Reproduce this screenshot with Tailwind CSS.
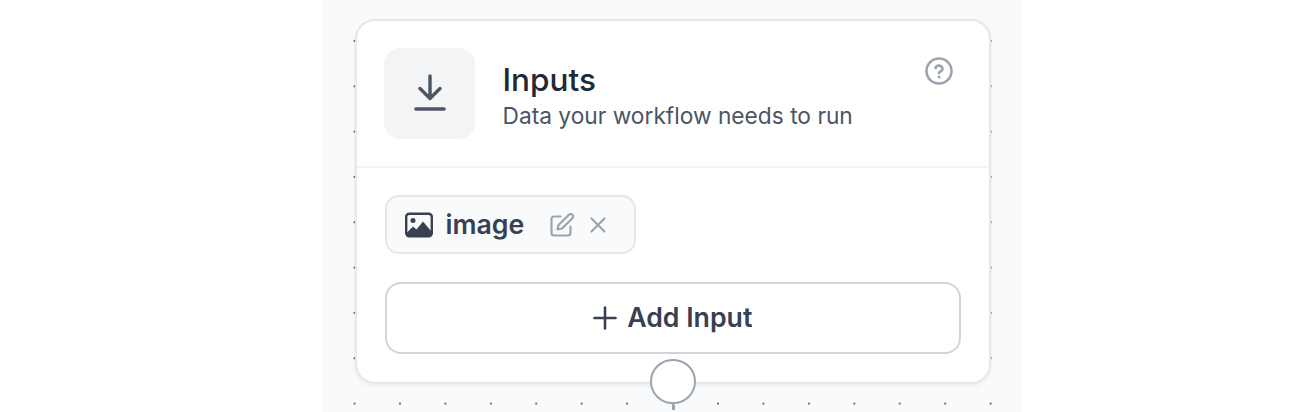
<!DOCTYPE html>
<html>
<head>
<meta charset="utf-8">
<script src="https://cdn.jsdelivr.net/npm/@tailwindcss/browser@4"></script>
</head>
<body class="bg-white font-['Inter',sans-serif] overflow-hidden">
<div class="w-[1316px] h-[412px] flex justify-center bg-white overflow-hidden">
  <div class="relative ml-[27px] w-[699px] h-[412px] bg-[#f9fafb] bg-[radial-gradient(circle,#6b7280_0.8px,transparent_1.2px)] bg-[size:45.45px_45.33px] bg-[position:9.8px_18.3px] shrink-0 overflow-hidden">
    <div class="ml-[33px] mt-[19px] w-[635.5px] h-[365px] bg-white border-2 border-[#e5e7eb] rounded-[20px] shadow-[0_2px_4px_rgba(0,0,0,0.06)] flex flex-col">
      <div class="h-[147px] border-b-2 border-[#f3f4f6] flex pl-[27px] pr-[35.5px] pt-[27px] relative">
        <div class="w-[91px] h-[91px] rounded-[16px] bg-[#f3f4f6] flex items-center justify-center shrink-0">
          <svg class="mb-[1px]" width="34" height="38" viewBox="0 0 34 38" fill="none" stroke="#4b5563" stroke-width="3.400" stroke-linecap="round" stroke-linejoin="round"><path d="M17 2v22.500M7 14.500 17 24.500l10-10"/><path d="M3 35h28" stroke-width="3.600"/></svg>
        </div>
        <div class="ml-[27.5px] flex flex-col pt-[13px]">
          <div class="text-[31.5px] leading-[38px] font-medium text-[#1f2937]">Inputs</div>
          <div class="text-[22.72px] leading-[32px] text-[#4b5563] mt-[1px] whitespace-nowrap">Data your workflow needs to run</div>
        </div>
        <svg class="ml-auto mt-[9px]" width="28" height="28" viewBox="0 0 28 28" fill="none" stroke="#9ca3af" stroke-width="2.600" stroke-linecap="round" stroke-linejoin="round"><circle cx="14" cy="14" r="12.500"/><path d="M10.500 11a3.600 3.600 0 0 1 7 .9c0 2.300-3.500 3-3.500 4.200"/><path d="M14 20h.01" stroke-width="3"/></svg>
      </div>
      <div class="pt-[27px] pl-[27.5px] pr-[27.5px] flex flex-col items-start">
        <div class="w-[251.5px] h-[59px] rounded-[14px] border-2 border-[#e5e7eb] bg-[#f9fafb] flex items-center pl-[18px]">
          <svg width="28" height="28" viewBox="0 0 28 28" class="shrink-0"><rect x="1.200" y="2.700" width="25.600" height="22.600" rx="3" fill="none" stroke="#374151" stroke-width="2.400"/><circle cx="8" cy="9.500" r="2.500" fill="#374151"/><path d="M2 25v-3.500l6-6 3.500 3L18 10.500l8 9.500v5z" fill="#374151"/></svg>
          <span class="ml-[13px] text-[26.7px] leading-none font-semibold text-[#374151]">image</span>
          <svg class="ml-[26px] shrink-0" width="24" height="24" viewBox="0 0 24 24" fill="none" stroke="#9ca3af" stroke-width="2.200" stroke-linecap="round" stroke-linejoin="round"><path d="M10.500 3.500H4a2.500 2.500 0 0 0-2.500 2.500v14A2.500 2.500 0 0 0 4 22.500h14a2.500 2.500 0 0 0 2.500-2.500v-6.500"/><path d="M19 1.800a2.400 2.400 0 0 1 3.400 3.400L12 15.500l-4.500 1 1-4.500z"/></svg>
          <svg class="ml-[15px] shrink-0" width="18" height="18" viewBox="0 0 18 18" fill="none" stroke="#9ca3af" stroke-width="2.200" stroke-linecap="round"><path d="M2.500 2.500l13 13M15.500 2.500l-13 13"/></svg>
        </div>
        <div class="mt-[28px] w-full h-[72px] rounded-[16px] border-2 border-[#d1d5db] bg-white flex items-center justify-center gap-[10px] pb-[1px]">
          <svg width="24" height="24" viewBox="0 0 24 24" fill="none" stroke="#374151" stroke-width="2.600" stroke-linecap="round"><path d="M12 1.500v21M1.500 12h21"/></svg>
          <span class="text-[26.7px] leading-none font-semibold text-[#374151]">Add Input</span>
        </div>
      </div>
    </div>
    <div class="absolute left-[328px] top-[359px] w-[46px] h-[45px] rounded-full border-2 border-[#9ca3af] bg-white"></div>
    <div class="absolute left-[350px] top-[404px] w-[3px] h-[6px] bg-[#9ca3af] rounded-t-sm"></div>
  </div>
</div>
</body>
</html>
